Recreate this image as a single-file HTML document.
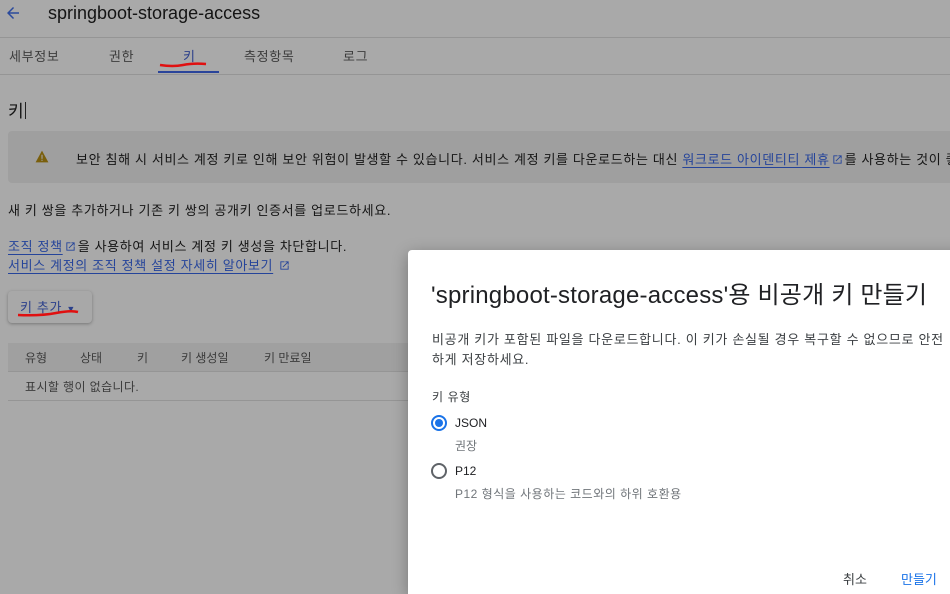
<!DOCTYPE html>
<html><head><meta charset="utf-8"><style>
*{margin:0;padding:0;box-sizing:border-box}
html,body{width:950px;height:594px;overflow:hidden}
body{background:#a9a9a9;font-family:"Liberation Sans","Noto Sans CJK KR",sans-serif;color:#151515;position:relative}
.a{position:absolute;white-space:nowrap}
.ln{color:#25449a;text-decoration:underline;text-underline-offset:3px}
.ext{display:inline-block;width:11px;height:11px;vertical-align:-1px;margin:0 2px}
.g{color:#3c3c3c}
.k{letter-spacing:0.65px}
</style></head><body>
<svg class="a" style="left:4px;top:4px" width="18" height="18" viewBox="0 0 24 24"><path d="M20 11H7.8l5.6-5.6L12 4l-8 8 8 8 1.4-1.4L7.8 13H20z" fill="#2b4a9c"/></svg>
<div class="a" style="left:48px;top:3px;font-size:18px;color:#141414">springboot-storage-access</div>
<div class="a" style="left:0;top:37px;width:950px;height:1px;background:#959595"></div>
<div class="a g k" style="left:9px;top:46px;font-size:13px">세부정보</div>
<div class="a g k" style="left:109px;top:46px;font-size:13px">권한</div>
<div class="a" style="left:183px;top:46px;font-size:13px;color:#2a3f8a">키</div>
<div class="a g k" style="left:244px;top:46px;font-size:13px">측정항목</div>
<div class="a g k" style="left:343px;top:46px;font-size:13px">로그</div>
<svg class="a" style="left:158px;top:60px" width="50" height="8"><path d="M2 5 Q15 7 25 5 T48 4" stroke="#e01010" stroke-width="2.5" fill="none"/></svg>
<div class="a" style="left:158px;top:71px;width:61px;height:2px;background:#2a449a"></div>
<div class="a" style="left:0;top:74px;width:950px;height:1px;background:#959595"></div>
<div class="a" style="left:8px;top:97px;font-size:17px">키<span style="display:inline-block;width:1px;height:17px;background:#222;vertical-align:-2px;margin-left:1px"></span></div>
<div class="a" style="left:8px;top:131px;width:942px;height:52px;background:#9f9f9f;border-radius:4px 0 0 4px"></div>
<svg class="a" style="left:35px;top:150px" width="14" height="13" viewBox="0 0 24 22"><path d="M12 1L1 21h22z" fill="#7a5f0c"/><rect x="11" y="8" width="2" height="7" fill="#9f9f9f"/><rect x="11" y="16.5" width="2" height="2" fill="#9f9f9f"/></svg>
<div class="a k" style="left:76px;top:149px;font-size:13px">보안 침해 시 서비스 계정 키로 인해 보안 위험이 발생할 수 있습니다. 서비스 계정 키를 다운로드하는 대신 <span class="ln">워크로드 아이덴티티 제휴</span><svg class="ext" viewBox="0 0 24 24"><path d="M19 19H5V5h7V3H3v18h18v-9h-2zM14 3v2h3.6l-9.8 9.8 1.4 1.4L19 6.4V10h2V3z" fill="#25449a"/></svg>를 사용하는 것이 좋</div>
<div class="a k" style="left:8px;top:200px;font-size:13px">새 키 쌍을 추가하거나 기존 키 쌍의 공개키 인증서를 업로드하세요.</div>
<div class="a k" style="left:8px;top:236px;font-size:13px"><span class="ln">조직 정책</span><svg class="ext" viewBox="0 0 24 24"><path d="M19 19H5V5h7V3H3v18h18v-9h-2zM14 3v2h3.6l-9.8 9.8 1.4 1.4L19 6.4V10h2V3z" fill="#25449a"/></svg>을 사용하여 서비스 계정 키 생성을 차단합니다.</div>
<div class="a k" style="left:8px;top:255px;font-size:13px"><span class="ln">서비스 계정의 조직 정책 설정 자세히 알아보기</span><svg class="ext" style="margin-left:6px" viewBox="0 0 24 24"><path d="M19 19H5V5h7V3H3v18h18v-9h-2zM14 3v2h3.6l-9.8 9.8 1.4 1.4L19 6.4V10h2V3z" fill="#25449a"/></svg></div>
<div class="a" style="left:8px;top:291px;width:84px;height:32px;background:#a8a8a8;border-radius:4px;box-shadow:0 1px 3px rgba(0,0,0,.3)"></div>
<div class="a k" style="left:20px;top:297px;font-size:13px;color:#2a3f8a">키 추가 <span style="font-size:9px">▼</span></div>
<svg class="a" style="left:16px;top:308px" width="64" height="10"><path d="M2 7 Q25 8 40 5 T62 4" stroke="#e01010" stroke-width="2.5" fill="none"/></svg>
<div class="a" style="left:8px;top:343px;width:400px;height:29px;background:#a0a0a0"></div>
<div class="a g" style="left:25px;top:349px;font-size:12px">유형</div>
<div class="a g" style="left:80px;top:349px;font-size:12px">상태</div>
<div class="a g" style="left:137px;top:349px;font-size:12px">키</div>
<div class="a g" style="left:181px;top:349px;font-size:12px">키 생성일</div>
<div class="a g" style="left:264px;top:349px;font-size:12px">키 만료일</div>
<div class="a" style="left:8px;top:371px;width:400px;height:1px;background:#959595"></div>
<div class="a g" style="left:25px;top:378px;font-size:12px;letter-spacing:0.4px">표시할 행이 없습니다.</div>
<div class="a" style="left:8px;top:400px;width:400px;height:1px;background:#959595"></div>

<div class="a" style="left:408px;top:250px;width:560px;height:344px;background:#fff;border-radius:4px 0 0 0;box-shadow:0 4px 16px rgba(0,0,0,.3)"></div>
<div class="a" style="left:431px;top:275px;font-size:24px;color:#202124;letter-spacing:0.2px">'springboot-storage-access'용 비공개 키 만들기</div>
<div class="a" style="left:432px;top:330px;font-size:13px;color:#3c4043;line-height:20px;letter-spacing:0.7px">비공개 키가 포함된 파일을 다운로드합니다. 이 키가 손실될 경우 복구할 수 없으므로 안전<br>하게 저장하세요.</div>
<div class="a" style="left:432px;top:388px;font-size:12px;color:#3c4043;letter-spacing:0.6px">키 유형</div>
<div class="a" style="left:431px;top:415px;width:16px;height:16px;border:2px solid #1a73e8;border-radius:50%"></div>
<div class="a" style="left:435px;top:419px;width:8px;height:8px;background:#1a73e8;border-radius:50%"></div>
<div class="a" style="left:455px;top:416px;font-size:12px;color:#202124">JSON</div>
<div class="a" style="left:455px;top:437px;font-size:12px;color:#70757a">권장</div>
<div class="a" style="left:431px;top:463px;width:16px;height:16px;border:2px solid #5f6368;border-radius:50%"></div>
<div class="a" style="left:455px;top:464px;font-size:12px;color:#202124">P12</div>
<div class="a" style="left:455px;top:485px;font-size:12px;color:#70757a;letter-spacing:0.5px">P12 형식을 사용하는 코드와의 하위 호환용</div>
<div class="a" style="left:843px;top:569px;font-size:13px;color:#3c4043">취소</div>
<div class="a" style="left:901px;top:569px;font-size:13px;color:#1a73e8">만들기</div>
</body></html>
